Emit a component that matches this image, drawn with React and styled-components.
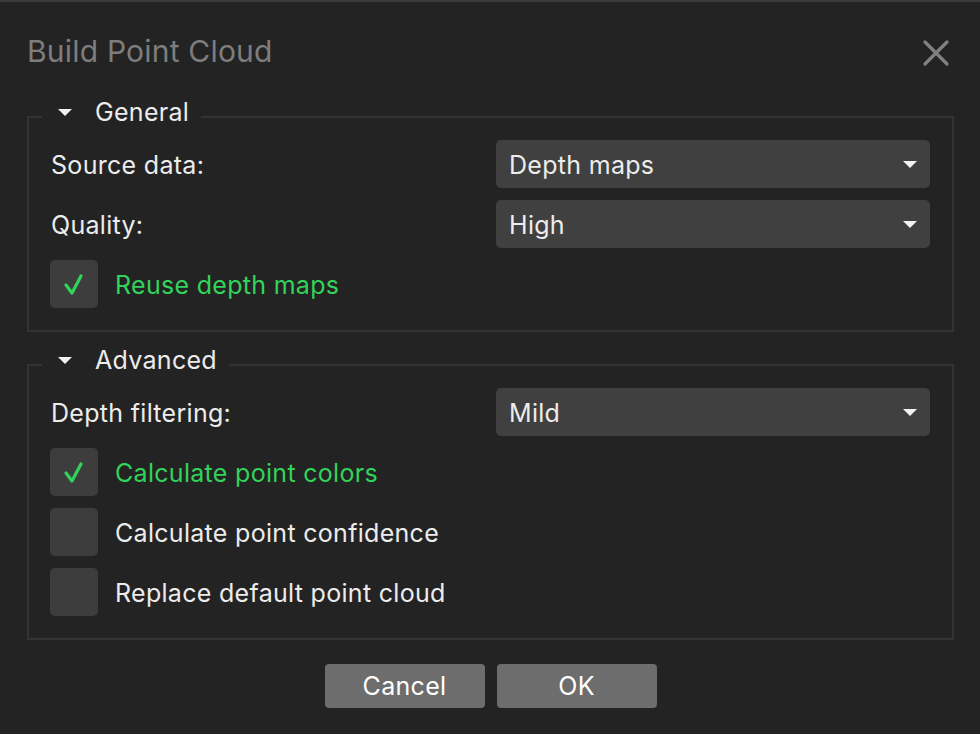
import React from 'react'
import styled, { createGlobalStyle } from 'styled-components'

const GlobalStyle = createGlobalStyle`
  html, body {
    margin: 0;
    padding: 0;
    background: #232323;
  }
  body {
    font-family: Inter, "Noto Sans", "Liberation Sans", sans-serif;
    -webkit-font-smoothing: antialiased;
  }
`

function Caret({ size = 14 }) {
  return (
    <svg width={size} height={size / 2} viewBox="0 0 14 7">
      <path d="M0 0 L14 0 L7 7 Z" fill="#f2f2f2" />
    </svg>
  )
}

function Check() {
  return (
    <svg width="48" height="48" viewBox="0 0 48 48">
      <path d="M16 25 L22 33 L31 16" fill="none" stroke="#32d35a" strokeWidth="3.2" strokeLinecap="round" strokeLinejoin="round" />
    </svg>
  )
}

function CloseIcon() {
  return (
    <svg width="26" height="26" viewBox="0 0 26 26">
      <path d="M2 2 L24 24 M24 2 L2 24" stroke="#808080" strokeWidth="3.2" strokeLinecap="round" />
    </svg>
  )
}

function Select({ value }) {
  return (
    <SelectBox>
      <Text>{value}</Text>
      <Caret />
    </SelectBox>
  )
}

function CheckRow({ checked, label }) {
  return (
    <CheckLine>
      <Box>{checked && <Check />}</Box>
      <CheckLabel $checked={checked}>{label}</CheckLabel>
    </CheckLine>
  )
}

function Group({ title, children }) {
  return (
    <GroupBox>
      <Legend>
        <Caret />
        <span>{title}</span>
      </Legend>
      <Rows>{children}</Rows>
    </GroupBox>
  )
}

function App() {
  return (
    <Dialog>
      <GlobalStyle />
      <Header>
        <Title>Build Point Cloud</Title>
        <CloseButton><CloseIcon /></CloseButton>
      </Header>

      <Group title="General">
        <FieldRow>
          <Label>Source data:</Label>
          <Select value="Depth maps" />
        </FieldRow>
        <FieldRow>
          <Label>Quality:</Label>
          <Select value="High" />
        </FieldRow>
        <CheckRow checked label="Reuse depth maps" />
      </Group>

      <Spacer />

      <Group title="Advanced">
        <FieldRow>
          <Label>Depth filtering:</Label>
          <Select value="Mild" />
        </FieldRow>
        <CheckRow checked label="Calculate point colors" />
        <CheckRow label="Calculate point confidence" />
        <CheckRow label="Replace default point cloud" />
      </Group>

      <Footer>
        <Button>Cancel</Button>
        <Button>OK</Button>
      </Footer>
    </Dialog>
  )
}

const Dialog = styled.div`
  width: 980px;
  height: 734px;
  box-sizing: border-box;
  border-top: 2px solid #3a3a3a;
  background: #232323;
  padding: 0 26px 0 27px;
  overflow: hidden;
`

const Header = styled.div`
  display: flex;
  align-items: center;
  justify-content: space-between;
  height: 64px;
  padding-top: 17px;
  margin-bottom: 18px;
`

const Title = styled.h1`
  margin: 0;
  font-size: 30px;
  font-weight: 400;
  color: #7d7d7d;
  letter-spacing: 0.2px;
`

const CloseButton = styled.div`
  display: flex;
  margin-right: 5px;
  margin-top: 4px;
`

const GroupBox = styled.fieldset`
  margin: 0;
  border: 2px solid #333333;
  padding: 7px 22px 22px 21px;
  min-width: 0;
`

const Legend = styled.legend`
  display: flex;
  align-items: center;
  gap: 23px;
  box-sizing: border-box;
  height: 32px;
  padding: 0 12px 11px 16px;
  margin-left: -8px;
  font-size: 25px;
  letter-spacing: 0.3px;
  color: #ececec;

  svg {
    margin-top: 1px;
  }
`

const Rows = styled.div`
  display: flex;
  flex-direction: column;
  gap: 12px;
`

const FieldRow = styled.div`
  display: grid;
  grid-template-columns: 1fr 434px;
  align-items: center;
  height: 48px;
`

const Text = styled.span`
  padding-top: 2px;
`

const Label = styled.span`
  font-size: 25px;
  letter-spacing: 0.3px;
  color: #ececec;
  padding: 2px 0 0 1px;
`

const SelectBox = styled.div`
  display: flex;
  align-items: center;
  justify-content: space-between;
  height: 48px;
  box-sizing: border-box;
  padding: 0 13px 0 13px;
  border-radius: 5px;
  background: #404040;
  font-size: 25px;
  letter-spacing: 0.3px;
  color: #ececec;
`

const CheckLine = styled.div`
  display: flex;
  align-items: center;
  gap: 17px;
  height: 48px;
`

const Box = styled.div`
  width: 48px;
  height: 48px;
  border-radius: 5px;
  background: #3d3d3d;
  flex: none;
`

const CheckLabel = styled.span`
  font-size: 25px;
  letter-spacing: 0.3px;
  padding-top: 2px;
  color: ${p => (p.$checked ? '#32d35a' : '#ececec')};
`

const Spacer = styled.div`
  height: 17px;
`

const Footer = styled.div`
  display: flex;
  justify-content: center;
  gap: 12px;
  margin-top: 24px;
`

const Button = styled.div`
  width: 160px;
  height: 44px;
  display: flex;
  align-items: center;
  justify-content: center;
  border-radius: 4px;
  background: #6d6d6d;
  font-size: 25px;
  letter-spacing: 0.3px;
  color: #ffffff;
`

export default App
